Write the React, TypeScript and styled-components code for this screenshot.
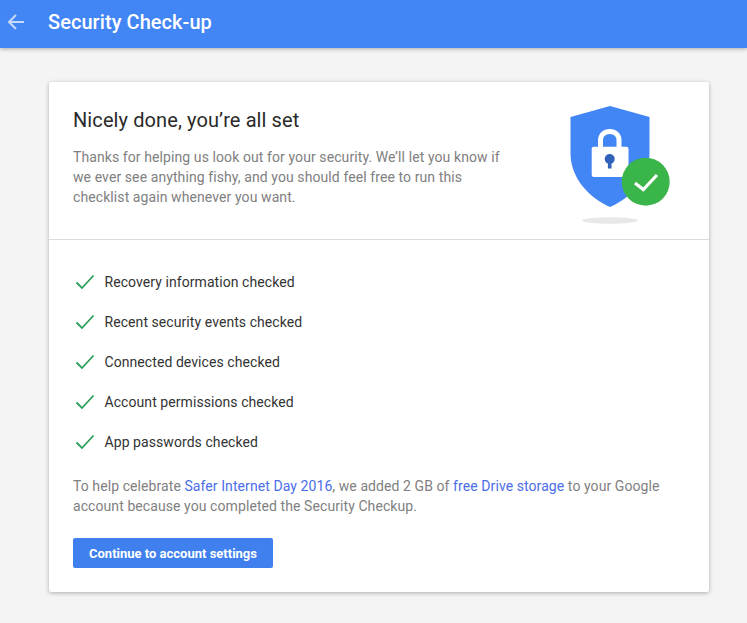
import React from "react";
import styled, { createGlobalStyle } from "styled-components";

const GlobalStyle = createGlobalStyle`
  html, body {
    margin: 0;
    padding: 0;
    background: #f4f4f4;
    font-family: Roboto, "Liberation Sans", sans-serif;
  }
`;

const checks = [
    "Recovery information checked",
    "Recent security events checked",
    "Connected devices checked",
    "Account permissions checked",
    "App passwords checked"
];

function ShieldIllustration() {
    return (
        <ShieldSvg viewBox="0 0 110 125" width="110" height="125">
            <ellipse cx="45" cy="120.5" rx="28" ry="3.2" fill="#e8e8e8"/>
            <path d="M45 6 L84.5 17 V53 C84.5 78 66 98 45 107 C24 98 5.5 78 5.5 53 V17 Z" fill="#4285f4"/>
            <path d="M35.5 48 V40.5 C35.5 35 39.5 31.5 44.8 31.5 C50 31.5 54 35 54 40.5 V48"
                  fill="none" stroke="#fff" strokeWidth="5"/>
            <rect x="26.7" y="46.7" width="36.8" height="30.3" rx="2" fill="#fff"/>
            <circle cx="44.7" cy="59" r="5" fill="#2f62b8"/>
            <rect x="42.9" y="60" width="3.6" height="8.5" fill="#2f62b8"/>
            <circle cx="80.7" cy="81.7" r="24" fill="#3ab54a"/>
            <path d="M70 83 L78.3 89.5 L92 75" fill="none" stroke="#fff" strokeWidth="3.2"/>
        </ShieldSvg>
    );
}

function CheckMark() {
    return (
        <svg width="20" height="16" viewBox="0 0 20 16">
            <path d="M1.5 8.5 L7 14 L18.5 1.5" fill="none" stroke="#2e9e5b" strokeWidth="1.8"/>
        </svg>
    );
}

export default function App() {
    return (
        <Page>
            <GlobalStyle/>
            <TopBar>
                <BackButton aria-label="Back">
                    <svg width="18" height="18" viewBox="0 0 18 18">
                        <path d="M17 9 H2 M9 2 L2 9 L9 16" fill="none" stroke="#c6d9fb" strokeWidth="2"/>
                    </svg>
                </BackButton>
                <BarTitle>Security Check-up</BarTitle>
            </TopBar>
            <Card>
                <Hero>
                    <HeroText>
                        <Heading>Nicely done, you’re all set</Heading>
                        <Lead>
                            Thanks for helping us look out for your security. We’ll let you know if
                            we ever see anything fishy, and you should feel free to run this
                            checklist again whenever you want.
                        </Lead>
                    </HeroText>
                    <ShieldIllustration/>
                </Hero>
                <Body>
                    <CheckList>
                        {checks.map(item => (
                            <CheckRow key={item}>
                                <CheckMark/>
                                <span>{item}</span>
                            </CheckRow>
                        ))}
                    </CheckList>
                    <Note>
                        To help celebrate <NoteLink href="#">Safer Internet Day 2016</NoteLink>, we
                        added 2 GB of <NoteLink href="#">free Drive storage</NoteLink> to your Google
                        account because you completed the Security Checkup.
                    </Note>
                    <ContinueButton type="button">Continue to account settings</ContinueButton>
                </Body>
            </Card>
        </Page>
    );
}

const Page = styled.div`
  width: 747px;
  height: 623px;
  overflow: hidden;
  background: #f4f4f4;
`;

const TopBar = styled.header`
  display: flex;
  align-items: center;
  height: 48px;
  padding: 0 0 4px 7px;
  box-sizing: border-box;
  background: #4285f4;
  box-shadow: 0 1px 4px rgba(0, 0, 0, 0.3);
`;

const BackButton = styled.button`
  display: flex;
  width: 18px;
  height: 18px;
  padding: 0;
  border: none;
  background: none;
  cursor: pointer;
`;

const BarTitle = styled.h1`
  margin: 0 0 0 23px;
  color: white;
  font-size: 20px;
  font-weight: 500;
  line-height: 28px;
  letter-spacing: 0.06px;
`;

const Card = styled.main`
  width: 660px;
  height: 510px;
  margin: 34px 0 0 49px;
  background: white;
  border-radius: 2px;
  box-shadow: 0 1px 4px rgba(0, 0, 0, 0.3);
`;

const Hero = styled.section`
  display: flex;
  justify-content: space-between;
  height: 158px;
  box-sizing: border-box;
  padding: 18px 34px 0 24px;
  border-bottom: 1px solid #dcdcdc;
`;

const HeroText = styled.div`
  width: 440px;
`;

const Heading = styled.h2`
  margin: 0 0 7px;
  color: #2a2a2a;
  font-size: 20px;
  font-weight: 400;
  line-height: 40px;
  letter-spacing: 0.1px;
`;

const Lead = styled.p`
  margin: 0;
  color: #808080;
  font-size: 14px;
  line-height: 20px;
  letter-spacing: 0.09px;
`;

const ShieldSvg = styled.svg`
  flex: none;
`;

const Body = styled.section`
  padding: 22px 24px 0;
`;

const CheckList = styled.ul`
  margin: 0 0 14px;
  padding: 0;
  list-style: none;
`;

const CheckRow = styled.li`
  display: flex;
  align-items: center;
  gap: 9.5px;
  height: 40px;
  padding-left: 2px;
  color: #333;
  font-size: 14px;
  letter-spacing: 0.07px;
`;

const Note = styled.p`
  margin: 0 0 22px;
  color: #808080;
  font-size: 14px;
  line-height: 20px;
  letter-spacing: 0.08px;
`;

const NoteLink = styled.a`
  color: #4a6ee8;
  text-decoration: none;
`;

const ContinueButton = styled.button`
  width: 200px;
  height: 30px;
  padding: 0;
  border: none;
  border-radius: 2px;
  background: #4080ee;
  color: white;
  font-family: Roboto, "Liberation Sans", sans-serif;
  font-size: 13px;
  font-weight: 700;
  cursor: pointer;
`;
